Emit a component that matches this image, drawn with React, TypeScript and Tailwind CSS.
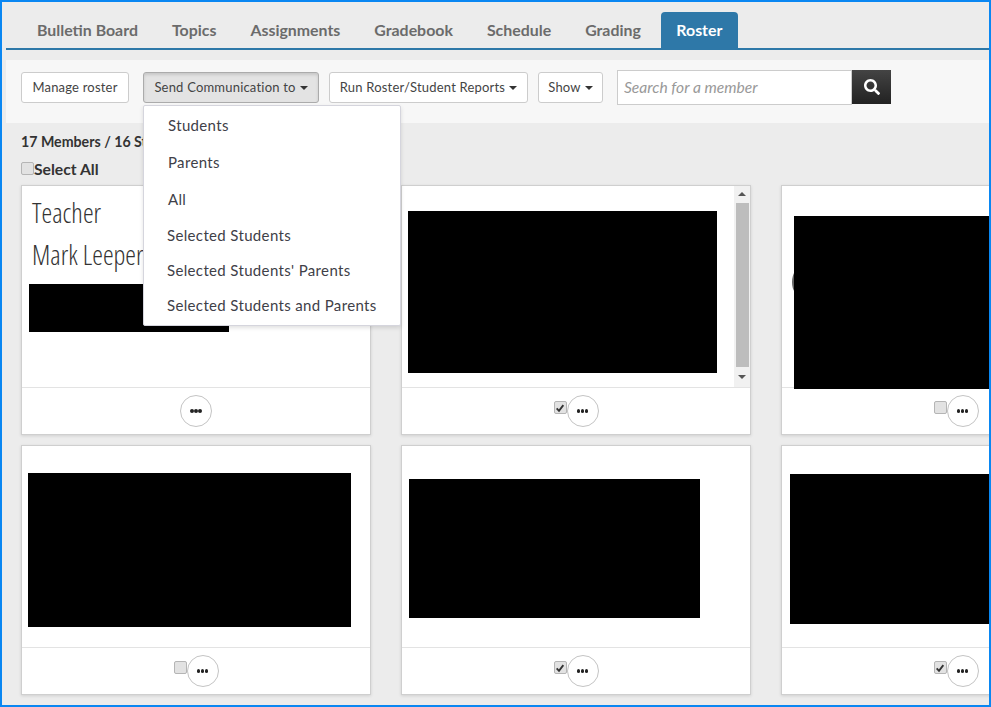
import { FaSearch } from "react-icons/fa"

const tabs = ["Bulletin Board", "Topics", "Assignments", "Gradebook", "Schedule", "Grading"]

function Caret() {
  return <span className="inline-block ml-1 align-middle border-x-[4px] border-x-transparent border-t-[4px] border-t-[#333]" />
}

function Check({ checked }: { checked?: boolean }) {
  return (
    <span className="relative inline-flex w-[13px] h-[13px] rounded-[2px] border border-[#b5b5b5] bg-[#e2e2e2] items-center justify-center">
      {checked && (
        <svg viewBox="0 0 12 12" className="w-[10px] h-[10px]">
          <path d="M2 6.5 L4.8 9.5 L10 2.5" fill="none" stroke="#333" strokeWidth="2.2" />
        </svg>
      )}
    </span>
  )
}

function More() {
  return (
    <span className="w-[32px] h-[32px] rounded-full border border-[#c4c4c4] bg-white inline-flex items-center justify-center gap-[0.5px]">
      <span className="w-[3.5px] h-[3.5px] rounded-full bg-[#222]" />
      <span className="w-[3.5px] h-[3.5px] rounded-full bg-[#222]" />
      <span className="w-[3.5px] h-[3.5px] rounded-full bg-[#222]" />
    </span>
  )
}

function Card({ children, checkbox, checked }: { children: React.ReactNode; checkbox?: boolean; checked?: boolean }) {
  return (
    <div className="w-[350px] h-[250px] shrink-0 flex flex-col bg-white border border-[#cfcfcf] shadow-[0_1px_3px_rgba(0,0,0,0.12)]">
      <div className="relative h-[201px] flex">{children}</div>
      <div className="flex-1 border-t border-[#e3e3e3] flex items-center justify-center">
        {checkbox && (
          <span className="mb-[7px] flex">
            <Check checked={checked} />
          </span>
        )}
        <More />
      </div>
    </div>
  )
}

function ToolButton({ label, caret, active, width }: { label: string; caret?: boolean; active?: boolean; width: string }) {
  return (
    <button
      className={
        "h-[31px] pt-[1px] rounded-[3px] border text-[13px] tracking-[0.2px] whitespace-nowrap " +
        width +
        " " +
        (active
          ? "bg-[#e3e3e3] border-[#ababab] text-[#444] shadow-[inset_0_2px_3px_rgba(0,0,0,0.12)]"
          : "bg-white border-[#ccc] text-[#444]")
      }
    >
      {label}
      {caret && <Caret />}
    </button>
  )
}

export default function App() {
  return (
    <div
      className="relative w-[991px] h-[707px] overflow-hidden border-2 border-[#0a87f2] bg-[#ececec] text-[#333]"
      style={{ fontFamily: "Lato, 'Noto Sans', sans-serif" }}
    >
      {/* tabs */}
      <div className="ml-[4px] h-[48px] pt-[10px] pl-[14px] flex border-b-2 border-[#2e78a8]">
        {tabs.map((t) => (
          <div key={t} className="px-[17px] h-[36px] flex items-center text-[15.9px] font-bold text-[#6b6b6b] whitespace-nowrap">
            {t}
          </div>
        ))}
        <div className="ml-[3px] w-[77px] h-[36px] rounded-t-[4px] bg-[#2e78a8] flex items-center justify-center text-[15.9px] font-bold text-white">
          Roster
        </div>
      </div>

      {/* toolbar */}
      <div className="ml-[4px] mt-[10px] h-[63px] bg-[#f7f7f7] pl-[15px] flex items-center">
        <div className="mb-[9px] flex items-center">
          <ToolButton label="Manage roster" width="w-[108px]" />
          <div className="ml-[14px] flex gap-[10px]">
            <ToolButton label="Send Communication to" caret active width="w-[176px]" />
            <ToolButton label="Run Roster/Student Reports" caret width="w-[199px]" />
            <ToolButton label="Show" caret width="w-[65px]" />
          </div>
          <div className="ml-[14px] flex items-center">
            <input
              readOnly
              placeholder="Search for a member"
              className="w-[235px] h-[35px] px-[6px] border border-[#ccc] bg-white text-[15.6px] italic placeholder:text-[#999] outline-none"
            />
            <button className="w-[39px] h-[34px] bg-linear-to-b from-[#444] to-[#222] flex items-center justify-center text-white">
              <FaSearch className="w-[16px] h-[16px]" />
            </button>
          </div>
        </div>
      </div>

      {/* members */}
      <div className="pl-[19px]">
        <div className="mt-[10px] text-[14.2px] font-bold leading-[18px]">17 Members / 16 Students</div>
        <div className="mt-[10px] h-[18px] flex items-center text-[15.7px] font-bold">
          <span className="mb-[3px] flex">
            <Check />
          </span>
          <span>Select All</span>
        </div>

        <div className="mt-[6px] grid grid-cols-[350px_350px_350px] gap-x-[30px] gap-y-[10px]">
          <Card>
            <div className="pl-[7px]">
              <div className="pl-[3px] pt-[11px] text-[27px] leading-[32px] font-light font-stretch-[75%] text-[#333]" style={{ fontFamily: "'Open Sans', sans-serif" }}>
                Teacher
              </div>
              <div className="pl-[3px] mt-[10px] text-[27px] leading-[32px] font-light font-stretch-[75%] text-[#333] whitespace-nowrap" style={{ fontFamily: "'Open Sans', sans-serif" }}>
                Mark Leeper
              </div>
              <div className="mt-[13px] w-[200px] h-[48px] bg-black" />
            </div>
          </Card>

          <Card checkbox checked>
            <div className="ml-[6px] mt-[25px] w-[309px] h-[162px] bg-black" />
            <div className="ml-auto w-[16px] h-full bg-[#f1f1f1] flex flex-col items-center">
              <span className="mt-[6px] border-x-[4px] border-x-transparent border-b-[4px] border-b-[#555]" />
              <span className="mt-[7px] w-[13px] h-[164px] bg-[#bdbdbd]" />
              <span className="mt-[8px] border-x-[4px] border-x-transparent border-t-[4px] border-t-[#555]" />
            </div>
          </Card>

          <Card checkbox>
            <div className="absolute left-[10px] top-[81px] w-[20px] h-[30px] rounded-[50%] bg-[#666]" />
            <div className="relative ml-[12px] mt-[30px] w-[300px] h-[173px] bg-black" />
          </Card>

          <Card checkbox>
            <div className="ml-[6px] mt-[27px] w-[323px] h-[154px] bg-black" />
          </Card>

          <Card checkbox checked>
            <div className="ml-[7px] mt-[33px] w-[291px] h-[139px] bg-black" />
          </Card>

          <Card checkbox checked>
            <div className="ml-[8px] mt-[28px] w-[300px] h-[150px] bg-black" />
          </Card>
        </div>
      </div>

      {/* send communication menu */}
      <div className="absolute left-[141px] top-[103px] w-[258px] h-[221px] bg-white border border-[#d5d5dd] rounded-[2px] shadow-[0_2px_4px_rgba(0,0,0,0.12)] text-[#404048] text-[15px] leading-[20px] tracking-[0.35px]">
        <div className="pl-[24px] pt-[9px]">Students</div>
        <div className="pl-[24px] mt-[17px]">Parents</div>
        <div className="pl-[24px] mt-[17px]">All</div>
        <div className="pl-[23px] mt-[16px]">Selected Students</div>
        <div className="pl-[23px] mt-[15px]">Selected Students' Parents</div>
        <div className="pl-[23px] mt-[15px]">Selected Students and Parents</div>
      </div>
    </div>
  )
}
